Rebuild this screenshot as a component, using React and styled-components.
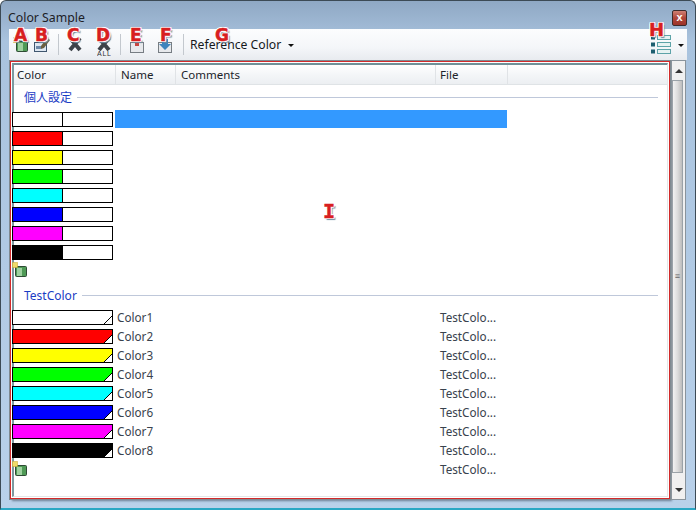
import React from "react";
import styled, { createGlobalStyle, css } from "styled-components";

const GlobalStyle = createGlobalStyle`
  html, body {
    margin: 0;
    padding: 0;
    width: 696px;
    height: 510px;
    overflow: hidden;
    font-family: "Noto Sans", "Noto Sans CJK JP", sans-serif;
  }
`;

const Frame = styled.div`
  position: relative;
  box-sizing: border-box;
  width: 696px;
  height: 510px;
  padding: 0 8px 4px 8px;
  border: 1px solid #3c4a55;
  border-bottom: 2px solid #2aa7c4;
  border-radius: 6px 6px 0 0;
  background: linear-gradient(180deg, #8fa8c4 0%, #a9c3de 8%, #b9d1ea 100%);
  display: flex;
  flex-direction: column;
`;

const TitleBar = styled.div`
  height: 28px;
  display: flex;
  align-items: flex-end;
  box-sizing: border-box;
  padding-bottom: 3px;
  margin-left: -1px;
  font-size: 12.3px;
  line-height: 16px;
  color: #1c2026;
`;

const CloseButton = styled.div`
  position: absolute;
  right: 8px;
  top: 9px;
  width: 13px;
  height: 14px;
  border: 1px solid #3d2a2a;
  border-radius: 2px;
  background: linear-gradient(180deg, #cf8074 0%, #b0463a 50%, #9c3329 100%);
  color: #fff;
  font: bold 11px/13px "Liberation Sans", sans-serif;
  text-align: center;
`;

const Toolbar = styled.div`
  height: 31px;
  display: flex;
  align-items: center;
  background: linear-gradient(180deg, #fcfdfe 0%, #f4f6f9 60%, #e8ebef 100%);
`;

const ToolIcon = styled.div`
  width: ${(p) => p.$w || 14}px;
  height: 20px;
  margin-left: ${(p) => p.$gap}px;
  display: flex;
  align-items: center;
  justify-content: center;
`;

const Sep = styled.div`
  width: 1px;
  height: 21px;
  background: #c3c8ce;
  margin-left: ${(p) => p.$gap}px;
`;

const RefColor = styled.div`
  font-size: 12.2px;
  color: #15181c;
  margin-left: 6px;
  display: flex;
  align-items: center;
  gap: 7px;
`;

const Caret = styled.span`
  width: 0;
  height: 0;
  border-left: 3px solid transparent;
  border-right: 3px solid transparent;
  border-top: 3px solid #111;
  margin-top: 2px;
`;

const ToolbarEnd = styled.div`
  margin-left: auto;
  display: flex;
  align-items: center;
  gap: 6px;
  padding-right: 3px;
`;

const Body = styled.div`
  flex: 1;
  display: flex;
  min-height: 0;
  margin-top: 1px;
  margin-bottom: 5px;
`;

const Panel = styled.div`
  box-sizing: border-box;
  width: 660px;
  margin-left: 1px;
  background: #fff;
  outline: 1px solid #7f8a91;
  box-shadow: 2px 2px 2px #6b7f95;
`;

const RedBox = styled.div`
  box-sizing: border-box;
  height: 100%;
  border: 1px solid #d22a2a;
  padding: 1px;
  background: #fff;
  display: flex;
  flex-direction: column;
`;

const Inner = styled.div`
  flex: 1;
  border: 1px solid #e4e6e8;
  border-top: 2px solid #6f9097;
  border-left: 2px solid #7b9aa0;
  min-height: 0;
`;

const HeaderRow = styled.div`
  display: grid;
  grid-template-columns: 102px 60px 260px 72px;
  height: 20px;
  background: linear-gradient(180deg, #ffffff 0%, #f4f6f8 50%, #eceff2 100%);
  border-bottom: 1px solid #dfe3e6;
  box-sizing: border-box;
`;

const HeaderCell = styled.div`
  font-size: 11.5px;
  line-height: 19px;
  padding-left: ${(p) => p.$pad || 5}px;
  color: #20242a;
  border-right: 1px solid #e0e3e6;
`;

const GroupTitle = styled.div`
  display: flex;
  align-items: center;
  gap: 5px;
  height: 20px;
  margin-top: ${(p) => p.$top}px;
  margin-left: 10px;
  width: 634px;
  font-size: 12px;
  color: #1a3cc4;
  &::after {
    content: "";
    flex: 1;
    height: 1px;
    background: #bfc8da;
  }
`;

const List = styled.div`
  margin-top: ${(p) => p.$top}px;
  margin-left: -2px;
  width: 640px;
  position: relative;
`;

const rowGrid = css`
  display: grid;
  grid-template-columns: 104px 60px 260px 72px;
  height: 19px;
  align-items: start;
`;

const Row = styled.div`
  ${rowGrid}
`;

const Swatch = styled.div`
  box-sizing: border-box;
  width: 101px;
  height: 15px;
  margin-top: 1px;
  border: 1px solid #000;
  display: flex;
  position: relative;
  background: ${(p) => p.$c || "#fff"};
`;

const Half = styled.div`
  width: 49px;
  height: 100%;
  background: ${(p) => p.$c};
  border-right: 1px solid #000;
`;

const Corner = styled.svg`
  position: absolute;
  right: 0;
  bottom: 0;
`;

const Selection = styled.div`
  grid-column: 2 / 5;
  margin: -1px 1px 0 -1px;
  height: 18px;
  background: #3399ff;
`;

const Cell = styled.div`
  font-size: 11.7px;
  line-height: 17px;
  padding-left: ${(p) => p.$pad}px;
  color: #39424d;
  white-space: nowrap;
`;

const AddRow = styled.div`
  ${rowGrid}
`;

const AddIconWrap = styled.div`
  display: flex;
  margin-top: ${(p) => p.$top || 0}px;
`;

const Scrollbar = styled.div`
  box-sizing: border-box;
  width: 15px;
  margin: -1px 0 -1px 1px;
  border: 1px solid #8a949c;
  background: #f0f0f0;
  display: flex;
  flex-direction: column;
`;

const ScrollBtn = styled.div`
  height: ${(p) => p.$h}px;
  box-sizing: border-box;
  padding-top: ${(p) => p.$pad || 0}px;
  display: flex;
  align-items: center;
  justify-content: center;
`;

const Arrow = styled.span`
  width: 0;
  height: 0;
  border-left: 4px solid transparent;
  border-right: 4px solid transparent;
  ${(p) => (p.$up ? "border-bottom: 4px solid #333;" : "border-top: 4px solid #333;")}
`;

const Thumb = styled.div`
  flex: 1;
  margin-right: 2px;
  border: 1px solid #9aa2a8;
  background: linear-gradient(90deg, #f2f2f2 0%, #dcdcdc 50%, #bdbdbd 100%);
  display: flex;
  align-items: center;
  justify-content: center;
  font: 9px/9px "Liberation Sans", sans-serif;
  color: #666;
`;

const Letter = styled.div`
  position: absolute;
  left: ${(p) => p.$x}px;
  top: ${(p) => p.$y}px;
  font: bold ${(p) => p.$size || 17}px/18px ${(p) => p.$font || '"DejaVu Sans"'}, sans-serif;
  color: #d81f1f;
  -webkit-text-stroke: 0.5px #d81f1f;
  text-shadow: -1px 0 #fff, 1px 0 #fff, 0 -1px #fff, 0 1px #fff, 1px 1px #fff,
    -1px -1px #fff, 1px -1px #fff, -1px 1px #fff, 2px 2px 1px #6c8da0;
`;

const AddIcon = () => (
  <svg width="15" height="15" viewBox="0 0 15 15">
    <rect x="3.5" y="4.5" width="11" height="10" rx="1" fill="#4f9a56" stroke="#2f4a35" />
    <rect x="5" y="6" width="5" height="8" fill="#9ed19f" />
    <rect x="0.5" y="0.5" width="5" height="5" fill="#f0dc6a" stroke="#c9a52a" strokeDasharray="1 1" />
  </svg>
);

const EditIcon = () => (
  <svg width="16" height="18" viewBox="0 0 16 18">
    <rect x="0.5" y="6.5" width="12" height="9" fill="#dfe8f2" stroke="#3f566e" />
    <rect x="2" y="10" width="5" height="3" fill="#6d89a8" />
    <path d="M7 10 L13 2 L16 4 L10 12 L7 13 Z" fill="#6b6040" />
  </svg>
);

const RemoveIcon = ({ all }) => (
  <svg width="14" height="22" viewBox="0 0 14 22">
    <path d="M2 4 L12 16 M12 4 L2 16" stroke="#3d4349" strokeWidth="4" />
    {all && (
      <text x="0" y="22" fontFamily="Liberation Sans" fontSize="7" fill="#333" textLength="14">
        ALL
      </text>
    )}
  </svg>
);

const MoveIcon = ({ down }) => (
  <svg width="14" height="18" viewBox="0 0 14 18">
    <rect x="0.5" y="6.5" width="13" height="10" fill="#e7e9ec" stroke="#777d83" />
    {down ? (
      <path d="M4 3 H10 V8 H13 L7 14 L1 8 H4 Z" fill="#3d84bd" />
    ) : (
      <rect x="5" y="0" width="4" height="10" fill="#c7443f" />
    )}
  </svg>
);

const ViewIcon = () => (
  <svg width="21" height="20" viewBox="0 0 21 20">
    {[0.5, 7.5, 14.5].map((y) => (
      <g key={y}>
        <rect x="0.5" y={y + 0.5} width="3" height="3" fill="#1e5f70" stroke="#1e5f70" />
        <rect x="6.5" y={y} width="13" height="4" fill="#e6f2f2" stroke="#5da3a8" />
      </g>
    ))}
  </svg>
);

const NAMED = ["#fff", "#ff0000", "#ffff00", "#00ff00", "#00ffff", "#0000ff", "#ff00ff", "#000000"];

const App = () => (
  <>
    <GlobalStyle />
    <Frame>
      <TitleBar>Color Sample</TitleBar>
      <CloseButton>x</CloseButton>
      <Toolbar>
        <ToolIcon $w={16} $gap={3}><AddIcon /></ToolIcon>
        <ToolIcon $w={16} $gap={6}><EditIcon /></ToolIcon>
        <Sep $gap={8} />
        <ToolIcon $gap={9}><RemoveIcon /></ToolIcon>
        <ToolIcon $gap={15}><RemoveIcon all /></ToolIcon>
        <Sep $gap={9} />
        <ToolIcon $gap={9}><MoveIcon /></ToolIcon>
        <ToolIcon $gap={14}><MoveIcon down /></ToolIcon>
        <Sep $gap={11} />
        <RefColor>Reference Color <Caret /></RefColor>
        <ToolbarEnd>
          <ViewIcon />
          <Caret />
        </ToolbarEnd>
      </Toolbar>
      <Body>
        <Panel>
          <RedBox>
            <Inner>
              <HeaderRow>
                <HeaderCell $pad={3}>Color</HeaderCell>
                <HeaderCell>Name</HeaderCell>
                <HeaderCell>Comments</HeaderCell>
                <HeaderCell $pad={4}>File</HeaderCell>
              </HeaderRow>
              <GroupTitle $top={2}>個人設定</GroupTitle>
              <List $top={4}>
                {NAMED.map((c, i) => (
                  <Row key={c}>
                    <Swatch><Half $c={c} /></Swatch>
                    {i === 0 && <Selection />}
                  </Row>
                ))}
                <AddRow><AddIconWrap $top={-1}><AddIcon /></AddIconWrap></AddRow>
              </List>
              <GroupTitle $top={3}>TestColor</GroupTitle>
              <List $top={4}>
                {NAMED.map((c, i) => (
                  <Row key={c}>
                    <Swatch $c={c}>
                      <Corner width="8" height="8" viewBox="0 0 8 8">
                        <path d="M0 8 L8 0 V8 Z" fill="#fff" />
                        <path d="M0 8 L8 0" stroke="#000" strokeWidth="1" />
                      </Corner>
                    </Swatch>
                    <Cell $pad={1}>Color{i + 1}</Cell>
                    <span />
                    <Cell $pad={4}>TestColo...</Cell>
                  </Row>
                ))}
                <AddRow>
                  <AddIconWrap><AddIcon /></AddIconWrap>
                  <span />
                  <span />
                  <Cell $pad={4}>TestColo...</Cell>
                </AddRow>
              </List>
            </Inner>
          </RedBox>
        </Panel>
        <Scrollbar>
          <ScrollBtn $h={19}><Arrow $up /></ScrollBtn>
          <Thumb>≡</Thumb>
          <ScrollBtn $h={26} $pad={7}><Arrow /></ScrollBtn>
        </Scrollbar>
      </Body>
      <Letter $x={13} $y={25}>A</Letter>
      <Letter $x={34} $y={25}>B</Letter>
      <Letter $x={66} $y={25}>C</Letter>
      <Letter $x={95} $y={25}>D</Letter>
      <Letter $x={129} $y={25}>E</Letter>
      <Letter $x={159} $y={25}>F</Letter>
      <Letter $x={214} $y={25}>G</Letter>
      <Letter $x={648} $y={20} $size={18}>H</Letter>
      <Letter $x={322} $y={201} $size={20} $font='"DejaVu Sans Mono"'>I</Letter>
    </Frame>
  </>
);

export default App;
